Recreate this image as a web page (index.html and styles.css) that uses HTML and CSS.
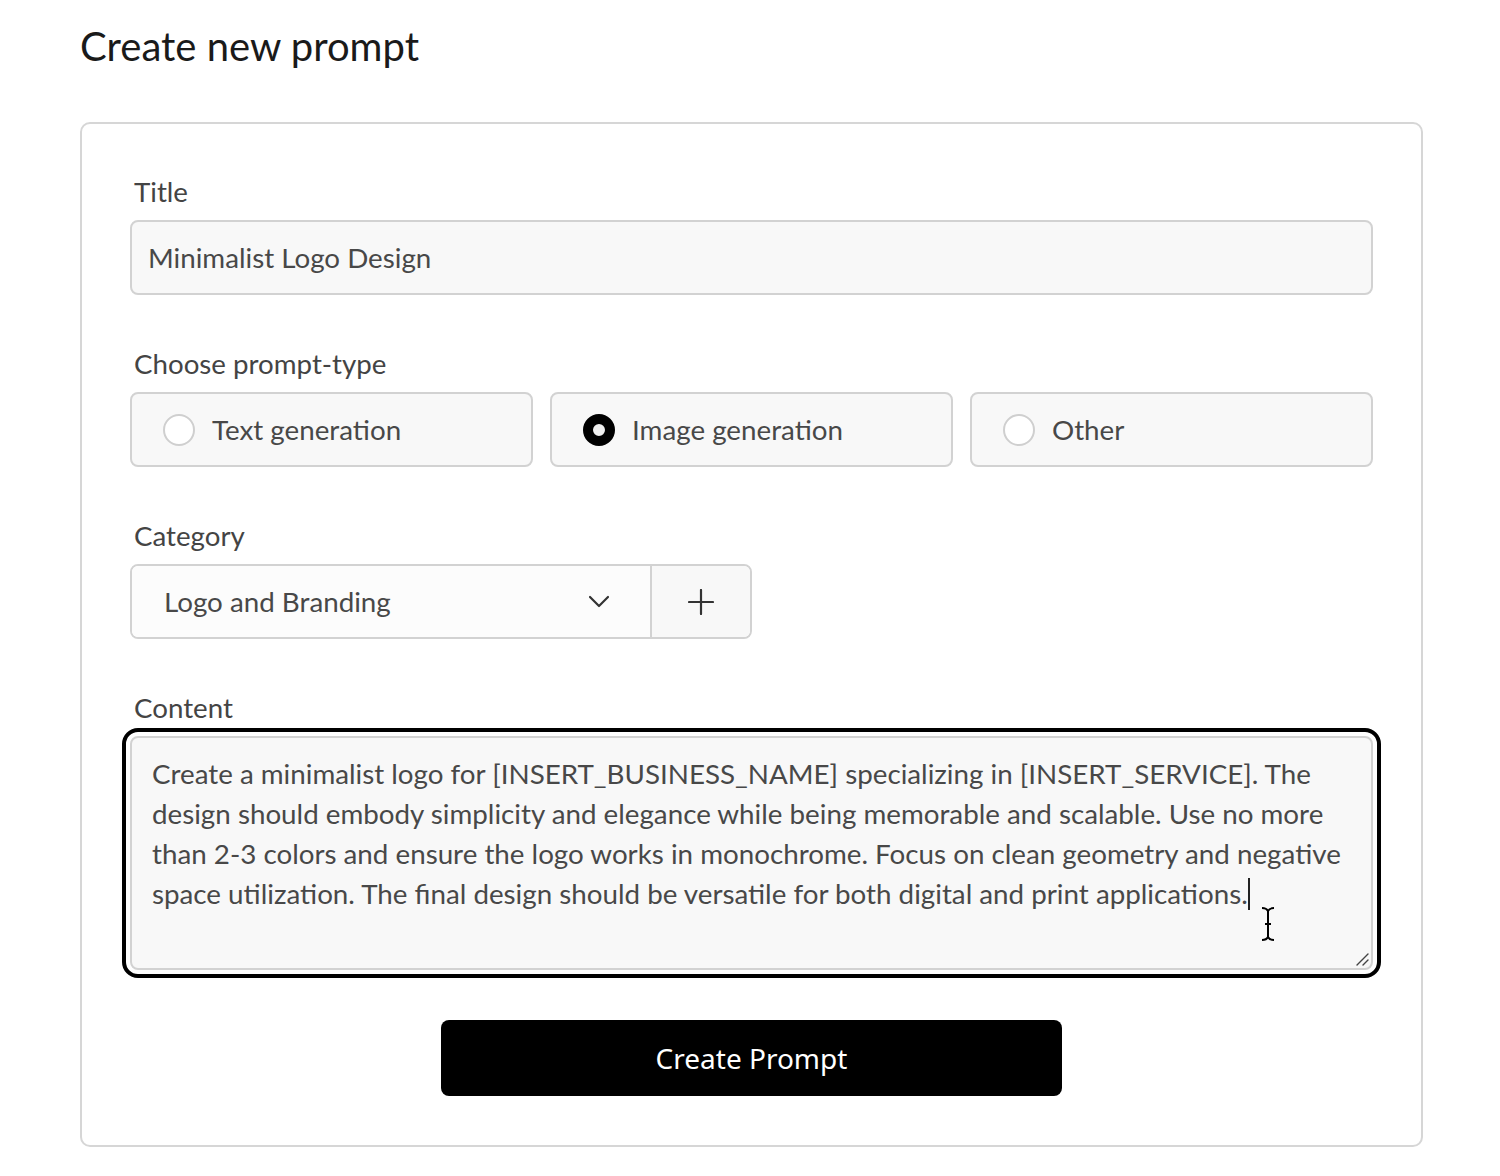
FILE: index.html
```html
<!DOCTYPE html>
<html lang="en">
<head>
<meta charset="utf-8">
<title>Create new prompt</title>
<link rel="stylesheet" href="styles.css">
</head>
<body>
<main class="page">
  <h1 class="page-title">Create new prompt</h1>
  <form class="card">
    <div class="field">
      <label class="field-label" for="title">Title</label>
      <input class="text-input" id="title" type="text" value="Minimalist Logo Design">
    </div>

    <div class="field">
      <div class="field-label">Choose prompt-type</div>
      <div class="radio-grid">
        <label class="radio-option">
          <span class="radio-dot"></span>
          <span class="radio-text">Text generation</span>
        </label>
        <label class="radio-option">
          <span class="radio-dot radio-dot--checked"></span>
          <span class="radio-text">Image generation</span>
        </label>
        <label class="radio-option">
          <span class="radio-dot"></span>
          <span class="radio-text">Other</span>
        </label>
      </div>
    </div>

    <div class="field">
      <div class="field-label">Category</div>
      <div class="select-group">
        <div class="select-main">
          <span class="select-value">Logo and Branding</span>
          <svg class="chevron" width="22" height="13" viewBox="0 0 22 13"><polyline points="2,2 11,11 20,2" fill="none" stroke="#333" stroke-width="2.2" stroke-linecap="round" stroke-linejoin="round"/></svg>
        </div>
        <div class="select-add">
          <svg width="26" height="26" viewBox="0 0 26 26"><path d="M13 1v24M1 13h24" stroke="#333" stroke-width="2.2" stroke-linecap="round"/></svg>
        </div>
      </div>
    </div>

    <div class="field">
      <label class="field-label" for="content">Content</label>
      <div class="textarea-wrap">
        <textarea class="text-area" id="content">Create a minimalist logo for [INSERT_BUSINESS_NAME] specializing in [INSERT_SERVICE]. The design should embody simplicity and elegance while being memorable and scalable. Use no more than 2-3 colors and ensure the logo works in monochrome. Focus on clean geometry and negative space utilization. The final design should be versatile for both digital and print applications.</textarea>
        <span class="caret"></span>
        <svg class="ibeam" width="16" height="36" viewBox="0 0 16 36"><path d="M2 2c3 0 5 1 6 3c1-2 3-3 6-3M8 5v26M2 34c3 0 5-1 6-3c1 2 3 3 6 3M5 18h6" fill="none" stroke="#000" stroke-width="2"/></svg>
        <svg class="grip" width="14" height="14" viewBox="0 0 14 14"><path d="M13 2L2 13M13 8L8 13" stroke="#444" stroke-width="1.4" stroke-linecap="round"/></svg>
      </div>
    </div>

    <div class="actions">
      <button class="primary-btn" type="button">Create Prompt</button>
    </div>
  </form>
</main>
</body>
</html>
```
FILE: styles.css
```css
* { box-sizing: border-box; }

html, body {
  margin: 0;
  background: #ffffff;
}

body {
  font-family: "Lato", "Noto Sans", sans-serif;
  color: #444444;
}

.page {
  padding: 22px 0 0 80px;
  width: 1423px;
}

.page-title {
  margin: 0 0 52px;
  font-size: 40px;
  line-height: 48px;
  font-weight: 400;
  color: #1a1a1a;
}

.card {
  border: 2px solid #d6d6d6;
  border-radius: 10px;
  padding: 51px 48px 49px;
  display: flex;
  flex-direction: column;
  gap: 52px;
}

.field {
  display: flex;
  flex-direction: column;
}

.field-label {
  display: block;
  font-size: 27.7px;
  line-height: 34px;
  margin: 0 0 11px 4px;
  color: #444444;
}

.text-input {
  height: 75px;
  width: 100%;
  border: 2px solid #d2d2d2;
  border-radius: 8px;
  background: #f8f8f8;
  padding: 0 16px;
  font-family: inherit;
  font-size: 27.75px;
  color: #484848;
}

.radio-grid {
  display: grid;
  grid-template-columns: repeat(3, 1fr);
  gap: 17px;
}

.radio-option {
  height: 75px;
  border: 2px solid #d2d2d2;
  border-radius: 8px;
  background: #f8f8f8;
  display: flex;
  align-items: center;
  padding-left: 31px;
  gap: 17px;
}

.radio-dot {
  width: 32px;
  height: 32px;
  border-radius: 50%;
  border: 2px solid #cfcfcf;
  background: #ffffff;
  flex: none;
}

.radio-dot--checked {
  border: 10px solid #000000;
  background: #efefef;
}

.radio-text {
  font-size: 27.75px;
  color: #484848;
}

.select-group {
  display: flex;
  width: 622px;
  height: 75px;
  border: 2px solid #d2d2d2;
  border-radius: 8px;
  overflow: hidden;
}

.select-main {
  flex: 1;
  display: flex;
  align-items: center;
  justify-content: space-between;
  padding: 0 40px 0 32px;
  background: #fcfcfc;
  border-right: 2px solid #d2d2d2;
}

.select-value {
  font-size: 27.75px;
  color: #484848;
}

.select-add {
  width: 98px;
  display: flex;
  align-items: center;
  justify-content: center;
  background: #f8f8f8;
}

.textarea-wrap {
  position: relative;
  display: flex;
}

.text-area {
  width: 100%;
  height: 234px;
  border: 2px solid #d2d2d2;
  border-radius: 8px;
  background: #f8f8f8;
  padding: 16px 20px;
  font-family: inherit;
  font-size: 27.75px;
  line-height: 40px;
  color: #484848;
  outline: 4px solid #000000;
  outline-offset: 4px;
  resize: none;
}

.caret {
  position: absolute;
  left: 1118px;
  top: 142px;
  width: 1.5px;
  height: 32px;
  background: #222222;
  pointer-events: none;
}

.ibeam {
  position: absolute;
  left: 1130px;
  top: 170px;
  pointer-events: none;
}

.grip {
  position: absolute;
  right: 4px;
  bottom: 4px;
  pointer-events: none;
}

.actions {
  display: flex;
  justify-content: center;
  margin-top: -3px;
}

.primary-btn {
  width: 621px;
  height: 76px;
  margin-top: 1px;
  border: none;
  border-radius: 8px;
  background: #000000;
  color: #ffffff;
  font-family: "Noto Sans", "Lato", sans-serif;
  font-size: 28px;
  cursor: pointer;
}
```
